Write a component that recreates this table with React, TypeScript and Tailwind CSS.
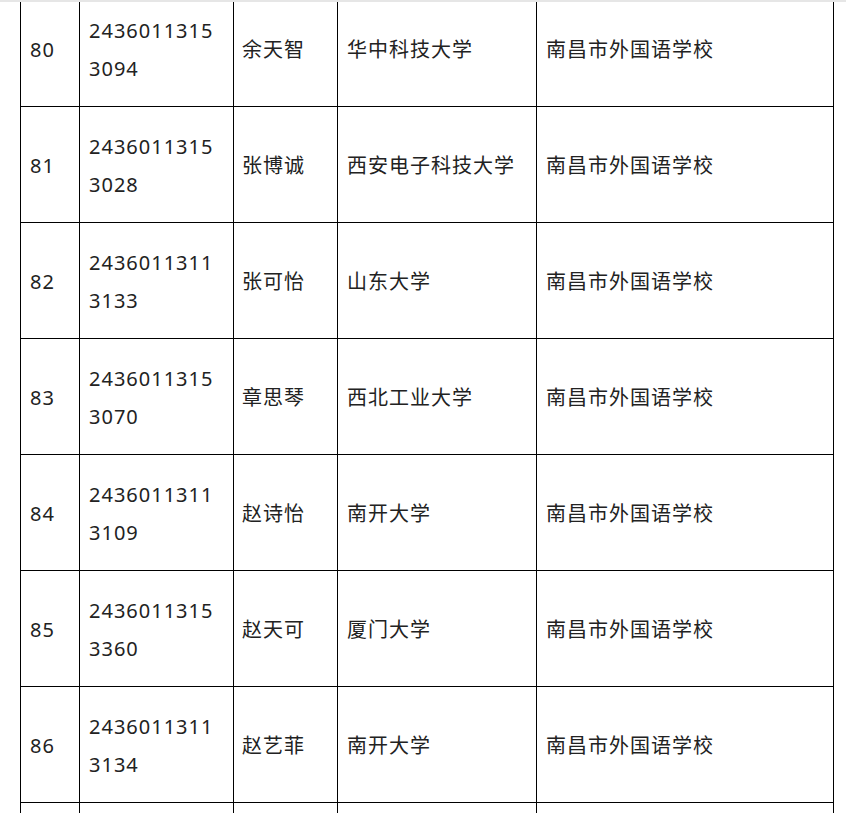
const rows = [
  { no: '80', id: '24360113153094', name: '余天智', univ: '华中科技大学', school: '南昌市外国语学校' },
  { no: '81', id: '24360113153028', name: '张博诚', univ: '西安电子科技大学', school: '南昌市外国语学校' },
  { no: '82', id: '24360113113133', name: '张可怡', univ: '山东大学', school: '南昌市外国语学校' },
  { no: '83', id: '24360113153070', name: '章思琴', univ: '西北工业大学', school: '南昌市外国语学校' },
  { no: '84', id: '24360113113109', name: '赵诗怡', univ: '南开大学', school: '南昌市外国语学校' },
  { no: '85', id: '24360113153360', name: '赵天可', univ: '厦门大学', school: '南昌市外国语学校' },
  { no: '86', id: '24360113113134', name: '赵艺菲', univ: '南开大学', school: '南昌市外国语学校' },
];

export default function App() {
  return (
    <div className="h-[813px] w-[846px] overflow-hidden bg-white">
      <div className="relative z-10 h-[2px] bg-[#e6e6e6]" />
      <table
        className="ml-[20px] mt-[-12px] w-[813px] table-fixed border-collapse text-[20px] leading-[38px] tracking-[1px] text-[#222]"
        style={{ fontFamily: '"Microsoft YaHei", "Noto Sans", "Noto Sans CJK SC", sans-serif' }}
      >
        <colgroup>
          <col className="w-[59px]" />
          <col className="w-[154px]" />
          <col className="w-[104px]" />
          <col className="w-[199px]" />
          <col className="w-[297px]" />
        </colgroup>
        <tbody>
          {rows.map((r) => (
            <tr key={r.no} className="h-[116px]">
              <td className="border border-black px-[9px] pt-[3px] align-middle">{r.no}</td>
              <td className="border border-black pl-[9px] pr-[12px] pt-[3px] align-middle break-all">{r.id}</td>
              <td className="border border-black px-[8px] pt-[3px] align-middle">{r.name}</td>
              <td className="border border-black px-[9px] pt-[3px] align-middle">{r.univ}</td>
              <td className="border border-black px-[9px] pt-[3px] align-middle">{r.school}</td>
            </tr>
          ))}
          {/* next row, cut off by the bottom of the view */}
          <tr className="h-[116px]">
            <td className="border border-black" />
            <td className="border border-black" />
            <td className="border border-black" />
            <td className="border border-black" />
            <td className="border border-black" />
          </tr>
        </tbody>
      </table>
    </div>
  );
}
